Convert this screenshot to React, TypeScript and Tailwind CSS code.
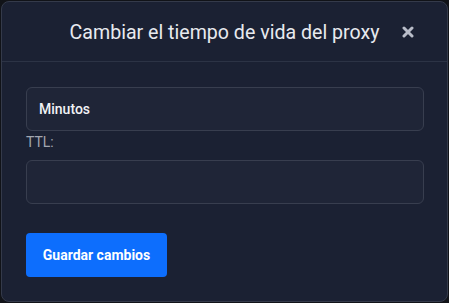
export default function App() {
  return (
    <div className="w-[449px] h-[303px] bg-[#111318] p-px" style={{ fontFamily: "Roboto, 'Liberation Sans', sans-serif" }}>
      <div className="h-full w-full rounded-lg border border-[#343a4a] bg-[#1b2133] flex flex-col overflow-hidden">
        {/* Header */}
        <div className="relative h-[60px] flex items-center justify-center border-b border-[#2c3345]">
          <h2 className="text-[19.6px] font-normal text-[#e8eaef] pt-[3px]">Cambiar el tiempo de vida del proxy</h2>
          <button className="absolute right-[33px] top-[24px] leading-none" title="Cerrar">
            <svg width="12" height="12" viewBox="0 0 12 12">
              <path d="M2 2 L10 10 M10 2 L2 10" stroke="#b9bdc9" strokeWidth="3" strokeLinecap="round" />
            </svg>
          </button>
        </div>

        {/* Body */}
        <div className="flex flex-col pl-6 pr-[23px] pt-[25px]">
          <div className="h-[44px] rounded-md border border-[#383e4f] bg-[#1f2537] flex items-center px-3">
            <span className="text-[14px] font-medium text-[#f1f2f5]">Minutos</span>
          </div>
          <label className="mt-[2px] text-[14px] text-[#a2a6b0] leading-[18px]">TTL:</label>
          <input className="mt-[9px] h-[44px] rounded-md border border-[#383e4f] bg-[#1f2537] px-3 text-sm text-white outline-none" />
          <button className="mt-[29px] w-[141px] h-[44px] rounded bg-[#0d6efd] text-white text-[14px] font-bold">Guardar cambios</button>
        </div>
      </div>
    </div>
  );
}
